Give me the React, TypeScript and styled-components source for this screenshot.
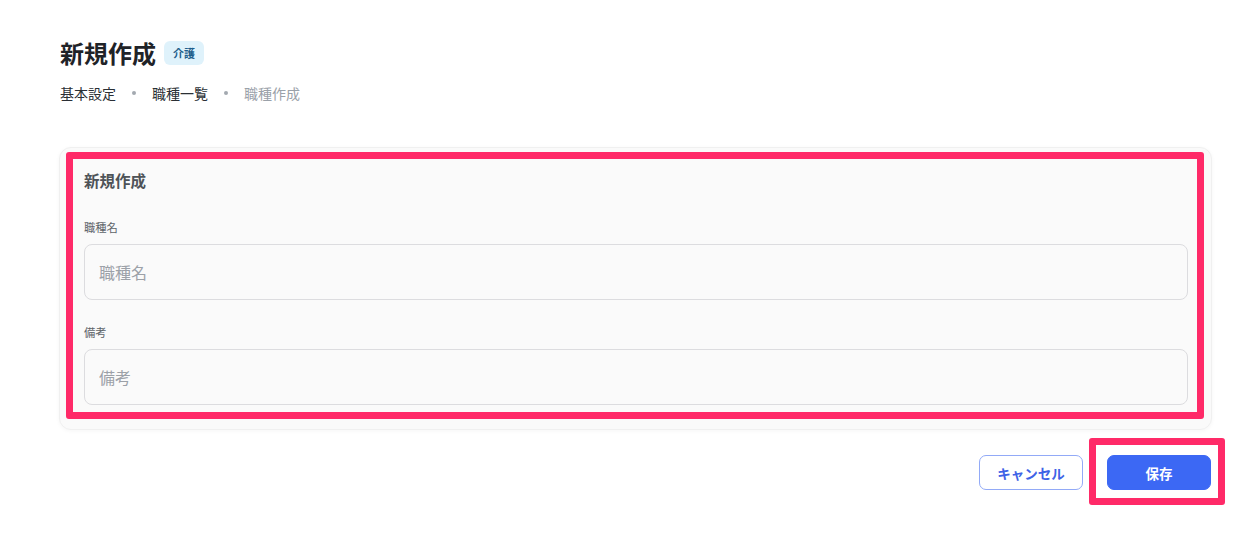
import React from "react";
import styled, { createGlobalStyle } from "styled-components";

const Global = createGlobalStyle`
  html, body { margin: 0; padding: 0; background: #ffffff; }
  body { font-family: "Noto Sans CJK JP", "Noto Sans", sans-serif; color: #1f2328; }
  * { box-sizing: border-box; }
`;

const Page = styled.div`
  padding: 35px 43px 40px 59px;
  display: flex;
  flex-direction: column;
`;

const Header = styled.header`
  padding-left: 1px;
  display: flex;
  flex-direction: column;
  gap: 12px;
`;

const TitleRow = styled.div`
  display: flex;
  align-items: center;
  gap: 8px;
`;

const Title = styled.h1`
  margin: 0;
  font-size: 24px;
  font-weight: 700;
  line-height: 36px;
  color: #1f2328;
`;

const Badge = styled.span`
  display: inline-flex;
  align-items: center;
  justify-content: center;
  height: 24px;
  width: 40px;
  border-radius: 6px;
  background: #dff2fb;
  color: #1f5f8c;
  font-size: 11px;
  font-weight: 700;
`;

const Crumbs = styled.nav`
  display: flex;
  align-items: center;
  gap: 16px;
  font-size: 14px;
  line-height: 20px;
`;

const Crumb = styled.span<{ $current?: boolean }>`
  color: ${(p) => (p.$current ? "#9aa1a9" : "#2a2f35")};
`;

const Dot = styled.span`
  width: 4px;
  height: 4px;
  border-radius: 50%;
  background: #a3a9b0;
`;

const Card = styled.section`
  position: relative;
  margin-top: 44px;
  background: #fafafa;
  border: 1px solid #f0f0f0;
  border-radius: 12px;
  box-shadow: 0 1px 4px rgba(0, 0, 0, 0.04);
  padding: 21px 23px 24px 24px;
  display: flex;
  flex-direction: column;
`;

const CardTitle = styled.h2`
  margin: 0 0 28px;
  font-size: 15.5px;
  font-weight: 700;
  line-height: 22px;
  color: #4e5358;
`;

const Field = styled.div`
  display: flex;
  flex-direction: column;
  gap: 9px;
  & + & {
    margin-top: 24px;
  }
`;

const Label = styled.label`
  font-size: 11.3px;
  line-height: 16px;
  color: #5d6369;
`;

const Input = styled.input`
  height: 56px;
  width: 100%;
  border: 1px solid #dcdcdf;
  border-radius: 8px;
  background: #fafafa;
  padding: 0 14px;
  font-family: inherit;
  font-size: 16px;
  color: #1f2328;
  outline: none;
  &::placeholder {
    color: #9ca1a8;
  }
`;

const Actions = styled.div`
  margin-top: 25px;
  display: flex;
  justify-content: flex-end;
  gap: 24px;
  padding-right: 1px;
`;

const Button = styled.button<{ $primary?: boolean }>`
  position: relative;
  width: 104px;
  height: 35px;
  border-radius: 7px;
  font-family: inherit;
  font-size: 13.5px;
  font-weight: 700;
  cursor: pointer;
  border: 1px solid ${(p) => (p.$primary ? "#3c68f4" : "#92aaf7")};
  background: ${(p) => (p.$primary ? "#3c68f4" : "#ffffff")};
  color: ${(p) => (p.$primary ? "#ffffff" : "#3e63e6")};
`;

const Highlight = styled.span<{ $t: number; $r: number; $b: number; $l: number }>`
  position: absolute;
  top: ${(p) => p.$t}px;
  right: ${(p) => p.$r}px;
  bottom: ${(p) => p.$b}px;
  left: ${(p) => p.$l}px;
  border: 7px solid #ff2a68;
  border-radius: 3px;
  pointer-events: none;
`;

export default function App() {
  return (
    <>
      <Global />
      <Page>
        <Header>
          <TitleRow>
            <Title>新規作成</Title>
            <Badge>介護</Badge>
          </TitleRow>
          <Crumbs>
            <Crumb>基本設定</Crumb>
            <Dot />
            <Crumb>職種一覧</Crumb>
            <Dot />
            <Crumb $current>職種作成</Crumb>
          </Crumbs>
        </Header>
        <Card>
          <CardTitle>新規作成</CardTitle>
          <Field>
            <Label>職種名</Label>
            <Input placeholder="職種名" />
          </Field>
          <Field>
            <Label>備考</Label>
            <Input placeholder="備考" />
          </Field>
          <Highlight $t={4} $r={7} $b={10} $l={6} />
        </Card>
        <Actions>
          <Button>キャンセル</Button>
          <Button $primary>
            保存
            <Highlight $t={-18} $r={-15} $b={-16} $l={-19} />
          </Button>
        </Actions>
      </Page>
    </>
  );
}
